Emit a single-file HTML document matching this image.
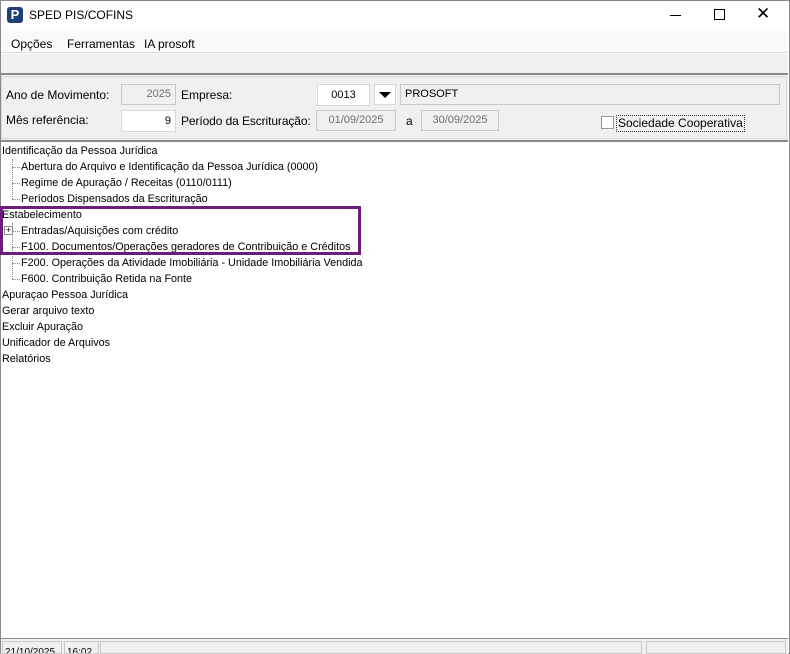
<!DOCTYPE html>
<html><head><meta charset="utf-8"><style>
*{box-sizing:border-box;margin:0;padding:0}
body{width:790px;height:654px;overflow:hidden;background:#fff;font-family:"Liberation Sans",sans-serif;font-size:12px;color:#000;position:relative}
.a{position:absolute;white-space:nowrap}
.box{position:absolute;border:1px solid #c8c8c8;background:#f0f0f0;color:#6d6d6d;font-size:11px;padding:0 4px;line-height:19px}
.wbox{position:absolute;border:1px solid #d8d8d8;background:#fff;font-size:11px;line-height:20px;padding:0 4px}
.t{position:absolute;white-space:nowrap;font-size:10.8px;line-height:16px;height:16px}
.dots{position:absolute;border-left:1px dotted #888;}
.h{position:absolute;border-top:1px dotted #888;width:8px}
</style></head><body>
<div class="a" style="left:0;top:0;width:790px;height:654px;border:1px solid #8a8a8a"></div>
<div class="a" style="left:7px;top:7px;width:16px;height:16px;background:#1f3f78;border-radius:3px;color:#fff;font-weight:bold;font-size:13px;line-height:16px;text-align:center">P</div>
<div class="a" style="left:29px;top:8px;font-size:12px">SPED PIS/COFINS</div>
<div class="a" style="left:670px;top:15px;width:11px;height:1px;background:#000"></div>
<div class="a" style="left:714px;top:9px;width:11px;height:11px;border:1px solid #000"></div>
<div class="a" style="left:756px;top:4px;font-size:17px;line-height:20px">✕</div>
<div class="a" style="left:1px;top:31px;width:787px;height:22px;background:#f9f9f9;border-bottom:1px solid #dcdcdc"></div>
<div class="a" style="left:11px;top:37px;font-size:12px">Opções</div>
<div class="a" style="left:67px;top:37px;font-size:12px">Ferramentas</div>
<div class="a" style="left:144px;top:37px;font-size:12px">IA prosoft</div>
<div class="a" style="left:1px;top:54px;width:787px;height:20px;background:#f0f0f0"></div>
<div class="a" style="left:1px;top:73px;width:787px;height:69px;background:#f0f0f0;border-top:2px solid #8a8a8a;border-bottom:2px solid #8a8a8a"></div>
<div class="a" style="left:1px;top:76px;width:786px;height:63px;border:1px solid #d8d8d8"></div>
<div class="a" style="left:6px;top:88px;font-size:12px">Ano de Movimento:</div>
<div class="box" style="left:121px;top:84px;width:55px;text-align:right">2025</div>
<div class="a" style="left:181px;top:88px;font-size:12px">Empresa:</div>
<div class="wbox" style="left:317px;top:84px;width:53px;text-align:center">0013</div>
<div class="a" style="left:374px;top:84px;width:22px;height:21px;background:#fff;border:1px solid #d8d8d8"></div>
<div class="a" style="left:379px;top:92px;width:0;height:0;border-left:6px solid transparent;border-right:6px solid transparent;border-top:6px solid #000"></div>
<div class="box" style="left:400px;top:84px;width:380px;color:#000">PROSOFT</div>
<div class="a" style="left:6px;top:113px;font-size:12px">Mês referência:</div>
<div class="wbox" style="left:121px;top:110px;width:55px;text-align:right">9</div>
<div class="a" style="left:181px;top:114px;font-size:12px;letter-spacing:-0.1px">Período da Escrituração:</div>
<div class="box" style="left:316px;top:110px;width:80px;text-align:center">01/09/2025</div>
<div class="a" style="left:406px;top:114px;font-size:12px">a</div>
<div class="box" style="left:421px;top:110px;width:78px;text-align:center">30/09/2025</div>
<div class="a" style="left:601px;top:116px;width:13px;height:13px;border:1px solid #999;background:#fff"></div>
<div class="a" style="left:616px;top:115px;font-size:12px;border:1px dotted #333;padding:0 1px;line-height:15px">Sociedade Cooperativa</div>
<div class="t" style="left:2px;top:143px">Identificação da Pessoa Jurídica</div>
<div class="dots" style="left:12px;top:159px;height:40px"></div>
<div class="h" style="left:12px;top:167px"></div><div class="t" style="left:21px;top:159px">Abertura do Arquivo e Identificação da Pessoa Jurídica (0000)</div>
<div class="h" style="left:12px;top:183px"></div><div class="t" style="left:21px;top:175px">Regime de Apuração / Receitas (0110/0111)</div>
<div class="h" style="left:12px;top:199px"></div><div class="t" style="left:21px;top:191px">Períodos Dispensados da Escrituração</div>
<div class="t" style="left:2px;top:207px">Estabelecimento</div>
<div class="dots" style="left:12px;top:223px;height:56px"></div>
<div class="h" style="left:12px;top:231px"></div>
<div class="a" style="left:4px;top:226px;width:9px;height:9px;border:1px solid #888;background:#fff;font-size:9px;line-height:7px;text-align:center">+</div>
<div class="t" style="left:21px;top:223px">Entradas/Aquisições com crédito</div>
<div class="h" style="left:12px;top:247px"></div><div class="t" style="left:21px;top:239px">F100. Documentos/Operações geradores de Contribuição e Créditos</div>
<div class="h" style="left:12px;top:263px"></div><div class="t" style="left:21px;top:255px">F200. Operações da Atividade Imobiliária - Unidade Imobiliária Vendida</div>
<div class="h" style="left:12px;top:279px"></div><div class="t" style="left:21px;top:271px">F600. Contribuição Retida na Fonte</div>
<div class="t" style="left:2px;top:287px">Apuraçao Pessoa Jurídica</div>
<div class="t" style="left:2px;top:303px">Gerar arquivo texto</div>
<div class="t" style="left:2px;top:319px">Excluir Apuração</div>
<div class="t" style="left:2px;top:335px">Unificador de Arquivos</div>
<div class="t" style="left:2px;top:351px">Relatórios</div>
<div class="a" style="left:0;top:206px;width:361px;height:49px;border:3px solid #6c1d7c"></div>
<div class="a" style="left:1px;top:638px;width:787px;height:16px;background:#f0f0f0;border-top:1px solid #8a8a8a"></div>
<div class="a" style="left:2px;top:641px;width:60px;height:13px;border:1px solid #c8c8c8;font-size:10px;line-height:22px;overflow:hidden;padding-left:2px">21/10/2025</div>
<div class="a" style="left:64px;top:641px;width:35px;height:13px;border:1px solid #c8c8c8;font-size:10px;line-height:22px;overflow:hidden;padding-left:2px">16:02</div>
<div class="a" style="left:100px;top:641px;width:542px;height:13px;border:1px solid #c8c8c8"></div>
<div class="a" style="left:646px;top:641px;width:140px;height:13px;border:1px solid #c8c8c8"></div>
</body></html>
